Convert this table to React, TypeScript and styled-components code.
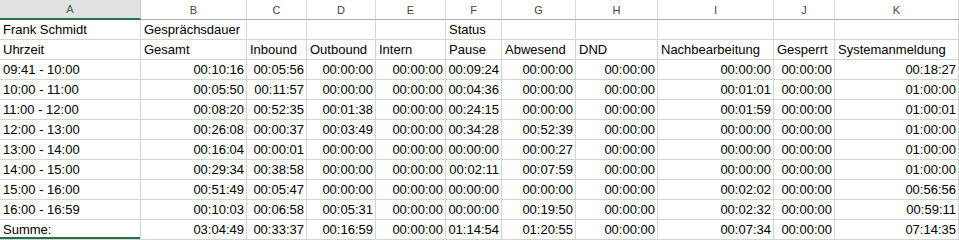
import styled, { createGlobalStyle } from "styled-components";

const GlobalStyle = createGlobalStyle`
  html, body {
    margin: 0;
    padding: 0;
    background: #ffffff;
  }

  body {
    font-family: "Liberation Sans", Arial, sans-serif;
  }
`;

const COLUMNS = ["A", "B", "C", "D", "E", "F", "G", "H", "I", "J", "K"];
const WIDTHS = [141, 106, 60, 69, 70, 56, 74, 82, 116, 61, 124];

const TITLE_ROW = ["Frank Schmidt", "Gesprächsdauer", "", "", "", "Status", "", "", "", "", ""];
const LABEL_ROW = [
  "Uhrzeit",
  "Gesamt",
  "Inbound",
  "Outbound",
  "Intern",
  "Pause",
  "Abwesend",
  "DND",
  "Nachbearbeitung",
  "Gesperrt",
  "Systemanmeldung"
];

const DATA: string[][] = [
  ["09:41 - 10:00", "00:10:16", "00:05:56", "00:00:00", "00:00:00", "00:09:24", "00:00:00", "00:00:00", "00:00:00", "00:00:00", "00:18:27"],
  ["10:00 - 11:00", "00:05:50", "00:11:57", "00:00:00", "00:00:00", "00:04:36", "00:00:00", "00:00:00", "00:01:01", "00:00:00", "01:00:00"],
  ["11:00 - 12:00", "00:08:20", "00:52:35", "00:01:38", "00:00:00", "00:24:15", "00:00:00", "00:00:00", "00:01:59", "00:00:00", "01:00:01"],
  ["12:00 - 13:00", "00:26:08", "00:00:37", "00:03:49", "00:00:00", "00:34:28", "00:52:39", "00:00:00", "00:00:00", "00:00:00", "01:00:00"],
  ["13:00 - 14:00", "00:16:04", "00:00:01", "00:00:00", "00:00:00", "00:00:00", "00:00:27", "00:00:00", "00:00:00", "00:00:00", "01:00:00"],
  ["14:00 - 15:00", "00:29:34", "00:38:58", "00:00:00", "00:00:00", "00:02:11", "00:07:59", "00:00:00", "00:00:00", "00:00:00", "01:00:00"],
  ["15:00 - 16:00", "00:51:49", "00:05:47", "00:00:00", "00:00:00", "00:00:00", "00:00:00", "00:00:00", "00:02:02", "00:00:00", "00:56:56"],
  ["16:00 - 16:59", "00:10:03", "00:06:58", "00:05:31", "00:00:00", "00:00:00", "00:19:50", "00:00:00", "00:02:32", "00:00:00", "00:59:11"],
  ["Summe:", "03:04:49", "00:33:37", "00:16:59", "00:00:00", "01:14:54", "01:20:55", "00:00:00", "00:07:34", "00:00:00", "07:14:35"]
];

const Sheet = styled.div`
  display: grid;
  grid-template-columns: ${WIDTHS.map(w => `${w}px`).join(" ")};
  grid-auto-rows: 20px;
  width: 959px;
  background-color: #ffffff;
`;

const ColumnHeader = styled.div<{ $selected: boolean }>`
  box-sizing: border-box;
  height: 20px;
  padding-top: 1px;

  display: flex;
  justify-content: center;
  align-items: center;

  background-color: ${props => (props.$selected ? "#e1e1e1" : "#ffffff")};
  border-right: 1px solid ${props => (props.$selected ? "#c8c8c8" : "#dadada")};
  border-bottom: ${props => (props.$selected ? "2px solid #217346" : "1px solid #ababab")};

  color: ${props => (props.$selected ? "#217346" : "#444444")};
  font-size: 11px;
  line-height: 17px;
`;

const Cell = styled.div<{ $numeric: boolean; $marked?: boolean }>`
  box-sizing: border-box;
  height: 20px;
  padding: 1px ${props => (props.$numeric ? "2px" : "3px")} 0 3px;

  display: flex;
  align-items: center;
  justify-content: ${props => (props.$numeric ? "flex-end" : "flex-start")};

  border-right: 1px solid #d4d4d4;
  border-bottom: 1px solid #d4d4d4;
  box-shadow: ${props => (props.$marked ? "inset 0 -2px 0 #217346" : "none")};

  color: #000000;
  font-size: 13px;
  line-height: 18px;
  white-space: nowrap;
  overflow: visible;
`;

const isTime = (value: string): boolean => /^\d\d:\d\d:\d\d$/.test(value);

const App = (): JSX.Element => {
  const lastRow = DATA.length - 1;

  return (
    <>
      <GlobalStyle />
      <Sheet>
        {COLUMNS.map((letter, i) => (
          <ColumnHeader key={letter} $selected={i === 0}>
            {letter}
          </ColumnHeader>
        ))}
        {TITLE_ROW.map((text, i) => (
          <Cell key={`t-${i}`} $numeric={false}>
            {text}
          </Cell>
        ))}
        {LABEL_ROW.map((text, i) => (
          <Cell key={`l-${i}`} $numeric={false}>
            {text}
          </Cell>
        ))}
        {DATA.map((row, r) =>
          row.map((value, c) => (
            <Cell
              key={`d-${r}-${c}`}
              $numeric={isTime(value)}
              $marked={r === lastRow && c === 0}
            >
              {value}
            </Cell>
          ))
        )}
      </Sheet>
    </>
  );
};

export default App;
